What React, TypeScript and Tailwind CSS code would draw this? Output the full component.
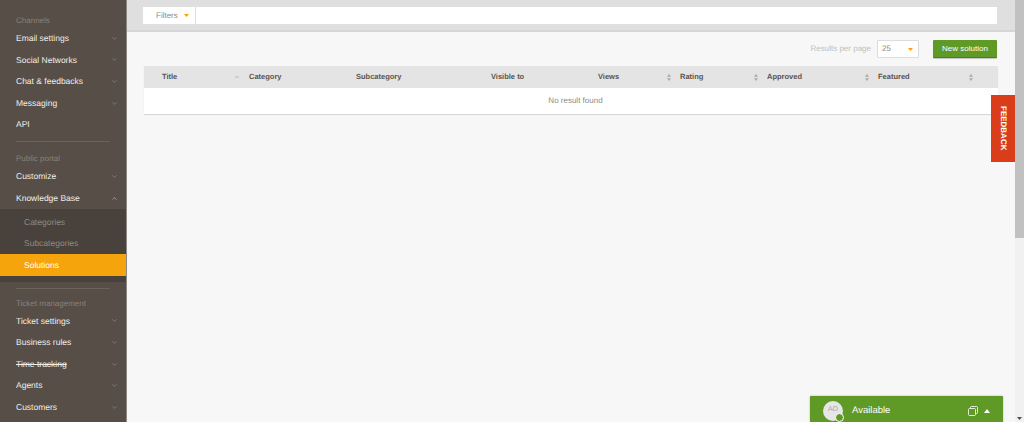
import { ChevronDown, ChevronUp } from "lucide-react";

function SortIcon() {
  return (
    <svg width="4" height="7" viewBox="0 0 4 7" className="shrink-0 text-[#a8a8a8]" fill="currentColor">
      <path d="M2 0 4 2.8H0zM2 7 0 4.2h4z" />
    </svg>
  );
}

function Caret({ className = "" }: { className?: string }) {
  return (
    <svg width="5" height="3" viewBox="0 0 5 3" className={className} fill="currentColor">
      <path d="M0 0h5L2.5 3z" />
    </svg>
  );
}

function NavItem({ label, open, noArrow, strike }: { label: string; open?: boolean; noArrow?: boolean; strike?: boolean }) {
  return (
    <div className="h-[21.6px] flex items-center justify-between pl-4 pr-[8px] text-[8.5px] text-[#f0eeec]">
      <span className={strike ? "line-through" : ""}>{label}</span>
      {noArrow ? null : open ? (
        <ChevronUp size={7} strokeWidth={2} className="text-[#c9c5c1]" />
      ) : (
        <ChevronDown size={7} strokeWidth={2} className="text-[#9b9690]" />
      )}
    </div>
  );
}

function SectionTitle({ label }: { label: string }) {
  return <div className="pl-4 text-[8px] leading-[10px] text-[#8a8279]">{label}</div>;
}

function Divider() {
  return <div className="mx-4 h-px bg-[#6b635b]" />;
}

function HeadCell({ label, width, sort, up, pr = "pr-[9px]" }: { label: string; width: string; sort?: boolean; up?: boolean; pr?: string }) {
  return (
    <div className={`${width} ${pr} flex items-center justify-between shrink-0`}>
      <span>{label}</span>
      {up ? <ChevronUp size={6} strokeWidth={2.5} className="text-[#9a9a9a]" /> : sort ? <SortIcon /> : null}
    </div>
  );
}

export default function App() {
  return (
    <div className="relative flex h-[422px] w-[1024px] overflow-hidden bg-[#f7f7f7] font-['Liberation_Sans',Arial,sans-serif] [text-rendering:geometricPrecision]">
      <aside className="w-[127px] shrink-0 border-r border-[#8d8a86] bg-[#564e47]">
        <div className="pt-4">
          <SectionTitle label="Channels" />
        </div>
        <div className="mt-[1.5px]">
          <NavItem label="Email settings" />
          <NavItem label="Social Networks" />
          <NavItem label="Chat & feedbacks" />
          <NavItem label="Messaging" />
          <NavItem label="API" noArrow />
        </div>
        <div className="mt-[6px]">
          <Divider />
        </div>
        <div className="mt-[12px]">
          <SectionTitle label="Public portal" />
        </div>
        <div className="mt-[1.5px]">
          <NavItem label="Customize" />
          <NavItem label="Knowledge Base" open />
        </div>
        <div className="bg-[#49423c] pt-[2px] pb-[6px] text-[8.5px]">
          <div className="flex h-[22px] items-center pl-6 text-[#8f8981]">Categories</div>
          <div className="flex h-[21px] items-center pl-6 text-[#8f8981]">Subcategories</div>
          <div className="flex h-[21.5px] items-center bg-[#f5a50b] pl-6 text-white">Solutions</div>
        </div>
        <div className="mt-[6px]">
          <Divider />
        </div>
        <div className="mt-[10px]">
          <SectionTitle label="Ticket management" />
        </div>
        <div className="mt-[1.5px]">
          <NavItem label="Ticket settings" />
          <NavItem label="Business rules" />
          <NavItem label="Time tracking" strike />
          <NavItem label="Agents" />
          <NavItem label="Customers" />
        </div>
      </aside>

      <main className="flex min-w-0 flex-1 flex-col">
        <div className="h-[32px] shrink-0 border-b-2 border-[#d5d5d5] bg-[#dfdfdf] pl-[16px] pr-[18px] pt-[7px]">
          <div className="flex h-[17px] bg-white text-[8px] text-[#8a8a8a]">
            <div className="flex w-[53px] items-center gap-[6px] border-r border-[#dddddd] pl-[13px]">
              <span>Filters</span>
              <Caret className="text-[#f5a50b]" />
            </div>
          </div>
        </div>

        <div className="flex h-[33px] items-center justify-end pr-[18px] pt-[1px]">
          <span className="mr-[6px] text-[8px] text-[#c0c0c0]">Results per page</span>
          <div className="flex h-[18px] w-[42px] items-center justify-between rounded-[1px] border border-[#dcdcdc] bg-white px-[4px] text-[8px] text-[#8a8a8a]">
            <span>25</span>
            <Caret className="mr-[1px] text-[#f5a50b]" />
          </div>
          <button className="ml-[14px] h-[18px] w-[64px] rounded-[1px] border-b border-[#4a7d1c] bg-[#5f9a27] text-[8px] text-white shadow-[0_1px_1px_rgba(0,0,0,0.2)]">
            New solution
          </button>
        </div>

        <div className="ml-[17px] mr-[17px] mt-[1px] rounded-[1px] bg-white shadow-[0_1px_1px_rgba(0,0,0,0.15)]">
          <div className="flex h-[22px] items-center bg-[#e4e4e4] pl-[18px] text-[7.5px] font-bold text-[#5b544e]">
            <HeadCell label="Title" width="w-[87px]" up />
            <HeadCell label="Category" width="w-[107px]" />
            <HeadCell label="Subcategory" width="w-[135px]" />
            <HeadCell label="Visible to" width="w-[107px]" />
            <HeadCell label="Views" width="w-[82px]" sort />
            <HeadCell label="Rating" width="w-[87px]" sort />
            <HeadCell label="Approved" width="w-[111px]" sort />
            <HeadCell label="Featured" width="w-[100px]" sort pr="pr-[5px]" />
          </div>
          <div className="flex h-[26px] items-center justify-center pl-[9px] text-[8px] text-[#8a8a8a]">No result found</div>
        </div>
      </main>

      <div className="flex w-[9px] shrink-0 flex-col bg-[#f1f1f1]">
        <div className="h-[238px] bg-[#c1c1c1]" />
        <div className="mt-auto mb-[2px] flex justify-center text-[#505050]">
          <Caret />
        </div>
      </div>

      <div className="absolute left-[991px] top-[95px] flex h-[67px] w-[24px] items-center justify-center bg-[#d93d1a] text-[8px] font-bold text-white [writing-mode:vertical-rl]">
        FEEDBACK
      </div>

      <div className="absolute left-[810px] top-[396px] flex h-[26px] w-[193px] items-center rounded-t-[1px] bg-[#5f9a27] pl-[13px] pr-[13px] pt-[3px] text-white shadow-[0_0_2px_rgba(0,0,0,0.3)]">
        <div className="relative flex h-5 w-5 items-center justify-center rounded-full bg-[#e6e6e6] text-[7px] text-[#a8a8a8]">
          AO
          <span className="absolute -bottom-[1px] -right-[1px] h-[9px] w-[9px] rounded-full border border-white bg-[#5f9a27]" />
        </div>
        <span className="ml-[9px] pt-[2px] text-[9.5px]">Available</span>
        <svg width="10" height="10" viewBox="0 0 10 10" className="ml-auto" fill="none" stroke="currentColor" strokeWidth="0.8">
          <rect x="0.5" y="2.5" width="7" height="7" rx="1" />
          <path d="M2.5 2.5V1.5a1 1 0 0 1 1-1h5a1 1 0 0 1 1 1v5a1 1 0 0 1-1 1H7.5" />
        </svg>
        <svg width="6" height="4" viewBox="0 0 6 4" className="ml-[6px]" fill="currentColor">
          <path d="M3 0l3 4H0z" />
        </svg>
      </div>
    </div>
  );
}
